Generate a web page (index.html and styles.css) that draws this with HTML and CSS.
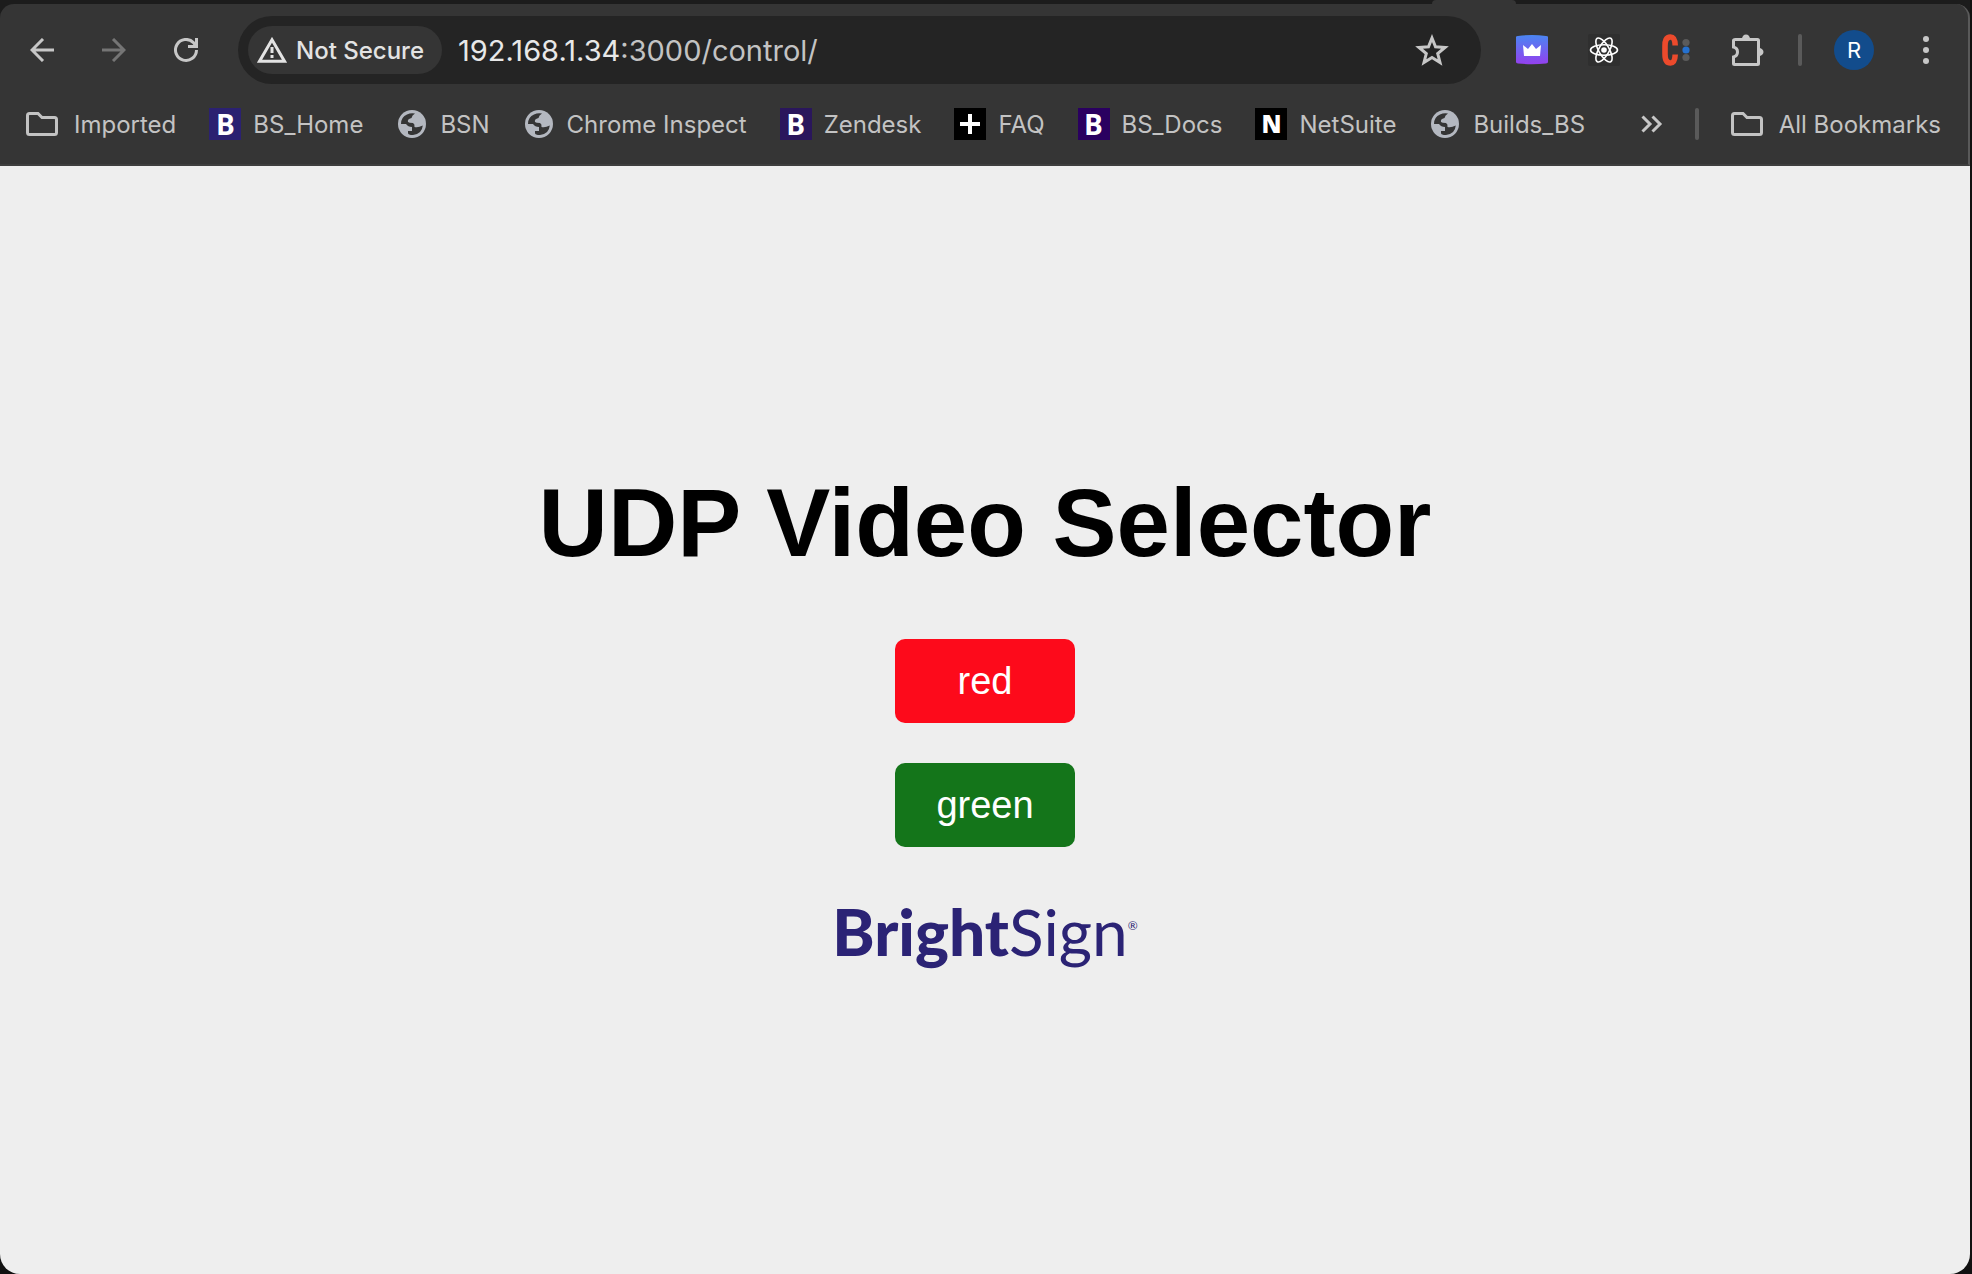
FILE: index.html
```html
<!DOCTYPE html>
<html lang="en">
<head>
<meta charset="utf-8">
<title>UDP Video Selector</title>
<link rel="stylesheet" href="styles.css">
</head>
<body>
<svg class="defs" aria-hidden="true">
  <symbol id="folder" viewBox="0 0 32 24"><path d="M3.500 1.500H12L16 5.500H28.500Q30.500 5.500 30.500 7.500V20.500Q30.500 22.500 28.500 22.500H3.500Q1.500 22.500 1.500 20.500V3.500Q1.500 1.500 3.500 1.500Z" fill="none" stroke="#c3c3c3" stroke-width="3"/></symbol>
  <symbol id="globe" viewBox="0 0 28 28"><circle cx="14" cy="14" r="14" fill="#b4b8c0"/><path d="M3 14Q3 7 9 4.500Q13 2.500 17 3.500Q14 5 13.500 8Q9 9 10 12Q11 13 15 13Q17 14 16.500 17Q20 18 24.800 15.500Q24 24 15 25Q10 25 10 23V21H14V17Q10 17 8 14Z" fill="#353535"/></symbol>
</svg>
<div class="window">
  <header class="chrome">
    <div class="tabstrip"><div class="tab-foot"></div></div>
    <div class="panel">
      <nav class="toolbar" aria-label="Browser toolbar">
        <div class="nav">
          <button class="tool" aria-label="Back"><svg width="24" height="24" viewBox="0 0 24 24"><path d="M24 12H2M13 1L2 12L13 23" fill="none" stroke="#c7c7c7" stroke-width="3"/></svg></button>
          <button class="tool" aria-label="Forward"><svg width="24" height="24" viewBox="0 0 24 24"><path d="M0 12H22M11 1L22 12L11 23" fill="none" stroke="#757575" stroke-width="3"/></svg></button>
          <button class="tool" aria-label="Reload"><svg width="24" height="24" viewBox="0 0 24 24"><path d="M22.500 12A10.500 10.500 0 1 1 19.500 4.600L22 8M22.500 0V8.500H14" fill="none" stroke="#c7c7c7" stroke-width="3"/></svg></button>
        </div>
        <div class="omnibox">
          <button class="chip"><svg width="30" height="26" viewBox="0 0 30 26"><path d="M15 2.800L27.500 24.200H2.500Z" fill="none" stroke="#e3e3e3" stroke-width="3"/><path d="M15 10V16M15 18V21" stroke="#e3e3e3" stroke-width="3"/></svg>Not Secure</button>
          <div class="url"><span class="host">192.168.1.34</span>:3000/control/</div>
          <button class="tool star" aria-label="Bookmark this tab"><svg width="34" height="32" viewBox="0 0 34 32"><path d="M17 4L20.500 12.800L30 13.500L22.700 19.500L25 28.500L17 23.500L9 28.500L11.300 19.500L4 13.500L13.500 12.800Z" fill="none" stroke="#c7c7c7" stroke-width="3"/></svg></button>
        </div>
        <div class="extensions">
          <button class="tool" aria-label="Crown extension"><svg width="32" height="32" viewBox="0 0 32 32"><defs><linearGradient id="violet" x2="0" y2="1"><stop stop-color="#4a86f2"/><stop offset="1" stop-color="#9440ee"/></linearGradient></defs><path d="M0 3Q0 2 2 2Q16 0 30 2Q32 2 32 3V28Q32 29 30 29.500Q16 31 2 29.500Q0 29 0 28Z" fill="url(#violet)"/><path d="M7 11L12 15L16 10L20 15L25 11L24 22H8Z" fill="#fff"/></svg></button>
          <button class="tool" aria-label="React extension"><svg width="32" height="32" viewBox="0 0 32 32"><rect width="32" height="32" rx="2" fill="#2f2f2f"/><g fill="none" stroke="#fff" stroke-width="1.600"><ellipse cx="16" cy="16" rx="13.500" ry="5.200"/><ellipse cx="16" cy="16" rx="13.500" ry="5.200" transform="rotate(60 16 16)"/><ellipse cx="16" cy="16" rx="13.500" ry="5.200" transform="rotate(120 16 16)"/></g><circle cx="16" cy="16" r="2.800" fill="#fff"/></svg></button>
          <button class="tool" aria-label="C extension"><svg width="32" height="32" viewBox="0 0 32 32"><path d="M15.200 11.500C15 5.500 13.500 3 10.500 3C6 3 5 7 5 12V20C5 25 6 29 10.500 29C13.500 29 15 26.500 15.200 20.500" fill="none" stroke="#ec4a2c" stroke-width="5.600"/><circle cx="26" cy="8.500" r="3.600" fill="#5b5b5b"/><circle cx="26" cy="16" r="3.600" fill="#2571cf"/><circle cx="26" cy="23.500" r="3.600" fill="#5b5b5b"/></svg></button>
          <button class="tool" aria-label="Extensions"><svg width="32" height="32" viewBox="0 0 32 32"><path d="M3.500 5.500H25.500Q26.500 5.500 26.500 6.500V29.500Q26.500 30.500 25.500 30.500H2.500Q1.500 30.500 1.500 29.500V23Q5.500 22 5.500 18Q5.500 14 1.500 13V6.500Q1.500 5.500 3.500 5.500Z" fill="none" stroke="#c7c7c7" stroke-width="3"/><path d="M10 5A4 4.500 0 0 1 18 5ZM27 14A4.500 4 0 0 1 27 22Z" fill="#c7c7c7"/></svg></button>
          <span class="rule"></span>
          <button class="avatar" aria-label="Profile">R</button>
          <button class="tool" aria-label="Menu"><svg width="32" height="32" viewBox="0 0 32 32"><g fill="#c7c7c7"><circle cx="16" cy="5" r="3"/><circle cx="16" cy="16" r="3"/><circle cx="16" cy="27" r="3"/></g></svg></button>
        </div>
      </nav>
      <nav class="bookmarks" aria-label="Bookmarks">
        <a class="mark" href="#"><svg class="folder" width="32" height="24"><use href="#folder"/></svg>Imported</a>
        <a class="mark" href="#"><span class="fav indigo">B</span>BS_Home</a>
        <a class="mark" href="#"><svg class="globe" width="28" height="28"><use href="#globe"/></svg>BSN</a>
        <a class="mark" href="#"><svg class="globe" width="28" height="28"><use href="#globe"/></svg>Chrome Inspect</a>
        <a class="mark" href="#"><span class="fav plum">B</span>Zendesk</a>
        <a class="mark" href="#"><svg width="32" height="32" viewBox="0 0 32 32"><path d="M0 0H32V32H0Z"/><path d="M6 16H26M16 6V26" stroke="#fff" stroke-width="4"/></svg>FAQ</a>
        <a class="mark" href="#"><span class="fav purple">B</span>BS_Docs</a>
        <a class="mark" href="#"><span class="fav black">N</span>NetSuite</a>
        <a class="mark" href="#"><svg class="globe" width="28" height="28"><use href="#globe"/></svg>Builds_BS</a>
        <div class="overflow">
          <button class="tool" aria-label="More bookmarks"><svg width="22" height="18" viewBox="0 0 22 18"><path d="M1.500 1.500L9 9L1.500 16.500M11.500 1.500L19 9L11.500 16.500" fill="none" stroke="#c7c7c7" stroke-width="3"/></svg></button>
          <span class="rule"></span>
          <a class="mark" href="#"><svg class="folder" width="32" height="24"><use href="#folder"/></svg>All Bookmarks</a>
        </div>
      </nav>
    </div>
  </header>
  <main class="page">
    <h1>UDP Video Selector</h1>
    <div class="choices">
      <button class="choice red">red</button>
      <button class="choice green">green</button>
    </div>
    <div class="logo"><b>Bright</b>Sign<sup>®</sup></div>
  </main>
</div>
</body>
</html>
```
FILE: styles.css
```css
* { box-sizing: border-box; }

body {
  margin: 0;
  background: #111;
  font-family: Inter, "Liberation Sans", sans-serif;
}

button {
  margin: 0;
  padding: 0;
  border: 0;
  background: none;
  color: inherit;
  font: inherit;
}

svg { display: block; flex: none; }
.defs { position: absolute; width: 0; height: 0; }

.window {
  display: flex;
  flex-direction: column;
  min-height: 100vh;
  padding-right: 2px;
}

.chrome { background: #1c1c1c; }

.tabstrip {
  display: flex;
  justify-content: flex-end;
  height: 4px;
  padding-right: 454px;
}

.tab-foot {
  width: 84px;
  height: 4px;
  background: #353535;
  border-radius: 4px 4px 0 0;
}

.panel {
  background: #353535;
  border-right: 2px solid #5a5a5a;
  border-bottom: 2px solid #3e3e3e;
  border-radius: 14px 14px 0 0;
}

.toolbar {
  display: flex;
  align-items: center;
  height: 92px;
  padding: 0 26px;
}

.nav { display: flex; gap: 40px; padding: 0 36px 0 0; }
.nav .tool { width: 32px; }

.tool { display: flex; justify-content: center; }

.omnibox {
  display: flex;
  flex: 1;
  align-items: center;
  height: 68px;
  padding: 0 32px 0 10px;
  background: #242424;
  border-radius: 34px;
}

.chip {
  display: flex;
  align-items: center;
  gap: 9px;
  height: 48px;
  padding: 0 18px 0 9px;
  border-radius: 24px;
  background: #353535;
  color: #e3e3e3;
  font-size: 24px;
  font-weight: 500;
}

.url {
  flex: 1;
  padding-left: 16px;
  color: #c3c3c3;
  font-size: 29px;
}

.host { color: #e8e8e8; }

.extensions {
  display: flex;
  align-items: center;
  gap: 40px;
  padding-left: 35px;
}

.rule {
  width: 4px;
  height: 32px;
  border-radius: 2px;
  background: #5a5a5a;
}

.extensions .rule { margin: 0 -4px 0 -6px; }

.avatar {
  width: 40px;
  height: 40px;
  margin: 0 -4px;
  border-radius: 50%;
  background: #124c8c;
  color: #fff;
  font-size: 22px;
}

.bookmarks {
  display: flex;
  align-items: center;
  gap: 33px;
  height: 68px;
  padding: 0 27px 12px 26px;
}

.mark {
  display: flex;
  align-items: center;
  gap: 12px;
  color: #c3c3c3;
  font-size: 24px;
  text-decoration: none;
  white-space: nowrap;
}

.globe { margin: 0 2px; }
.folder { margin-right: 4px; }

.fav {
  display: grid;
  place-items: center;
  width: 32px;
  height: 32px;
  color: #fff;
  font: bold 28px/32px "Open Sans", sans-serif;
}

.indigo { background: #2b2171; }
.plum { background: #2a165c; }
.purple { background: #2a0060; }
.black { background: #000; font-size: 24px; font-weight: 800; }

.overflow {
  display: flex;
  align-items: center;
  gap: 32px;
  margin-left: auto;
}

.page {
  display: flex;
  flex: 1;
  flex-direction: column;
  align-items: center;
  justify-content: center;
  border-radius: 0 0 20px 20px;
  background: #eee;
  font-family: "Liberation Sans", Arial, sans-serif;
}

h1 {
  margin: 66px 0 62px;
  color: #000;
  font-size: 96px;
  line-height: 108px;
}

.choices { display: grid; gap: 40px; }

.choice {
  width: 180px;
  height: 84px;
  border-radius: 10px;
  color: #fff;
  font-size: 38px;
}

.red { background: #fd0a1b; }
.green { background: #14751a; }

.logo {
  display: flex;
  margin: 47px 0 67px;
  color: #2b2375;
  font: 64px/76px Lato, sans-serif;
}

.logo b { font-weight: 900; }
.logo sup { font-size: 12px; line-height: 64px; }
```
